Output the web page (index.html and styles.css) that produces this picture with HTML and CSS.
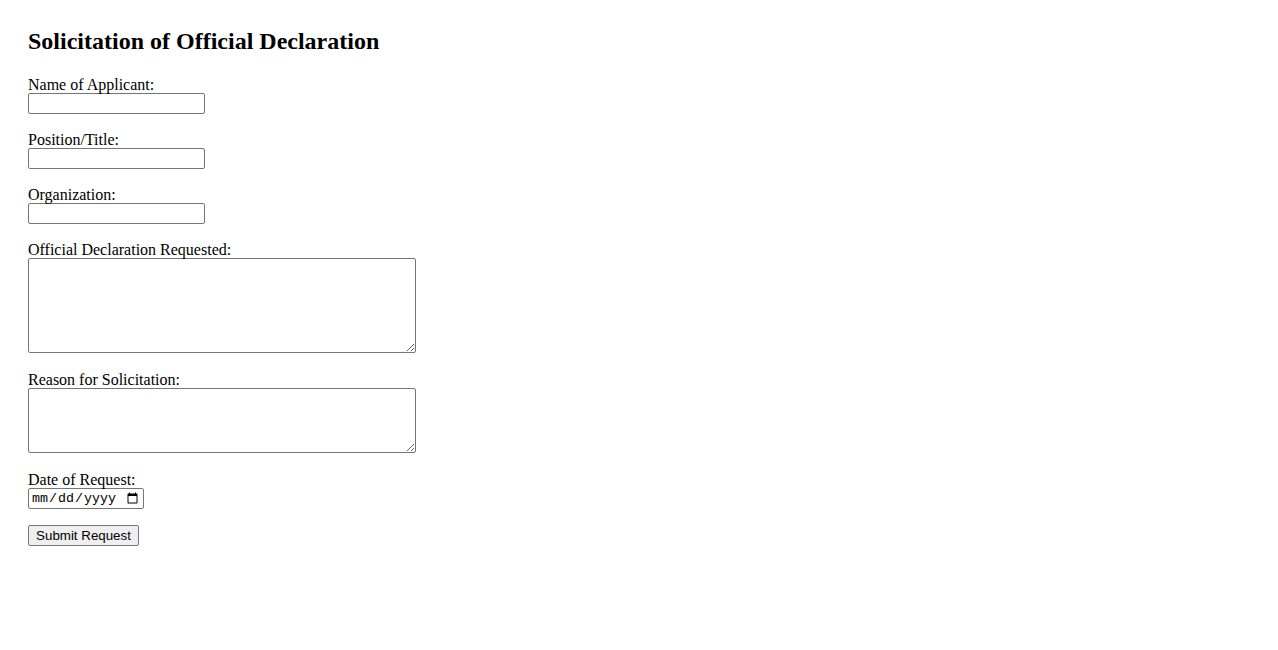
FILE: index.html
```html
<!DOCTYPE html>
<html>
<head>
  <title>Solicitation of Official Declaration</title>
  <link rel="stylesheet" href="styles.css">
</head>
<body>
  <h2>Solicitation of Official Declaration</h2>
  <form id="solicitationForm">
    <div class="field">
      <label for="applicantName">Name of Applicant:</label>
      <input type="text" id="applicantName" name="applicantName">
    </div>
    <div class="field">
      <label for="position">Position/Title:</label>
      <input type="text" id="position" name="position">
    </div>
    <div class="field">
      <label for="organization">Organization:</label>
      <input type="text" id="organization" name="organization">
    </div>
    <div class="field">
      <label for="declaration">Official Declaration Requested:</label>
      <textarea id="declaration" name="declaration" class="tall"></textarea>
    </div>
    <div class="field">
      <label for="reason">Reason for Solicitation:</label>
      <textarea id="reason" name="reason" class="short"></textarea>
    </div>
    <div class="field">
      <label for="requestDate">Date of Request:</label>
      <input type="date" id="requestDate" name="requestDate">
    </div>
    <button type="submit">Submit Request</button>
  </form>
</body>
</html>
```

FILE: styles.css
```css
body {
  font-family: "Liberation Serif", "Times New Roman", serif;
  font-size: 16px;
  color: #000;
  background-color: #fff;
  margin: 0;
  padding: 28px;
}
h2 {
  font-size: 24px;
  line-height: 27px;
  margin: 0 0 20px;
}
.field {
  margin-bottom: 16px;
}
.field:nth-child(4),
.field:nth-child(5) {
  margin-bottom: 17px;
}
label {
  display: block;
  line-height: 17px;
  padding-top: 1px;
}
input[type="text"],
input[type="date"],
textarea {
  display: block;
  box-sizing: border-box;
  margin: 0;
  border: 1px solid #767676;
  border-radius: 2px;
  background-color: #fff;
}
input[type="text"] {
  width: 177px;
  height: 21px;
  padding: 1px 2px;
}
input[type="date"] {
  width: 116px;
  height: 21px;
  padding: 1px 2px;
  font-family: "Liberation Mono", "DejaVu Sans Mono", monospace;
  font-size: 13.33px;
}
textarea {
  width: 388px;
  padding: 2px;
  font-family: "Liberation Mono", monospace;
  font-size: 13.33px;
}
textarea.tall {
  height: 95px;
}
textarea.short {
  height: 65px;
}
button[type="submit"] {
  display: block;
  box-sizing: border-box;
  width: 111px;
  height: 21px;
  margin: 0;
  padding: 1px 6px;
  font-family: "Liberation Sans", Arial, sans-serif;
  font-size: 13.33px;
  color: #000;
  background-color: #efefef;
  border: 1px solid #767676;
  border-radius: 2px;
}
```
